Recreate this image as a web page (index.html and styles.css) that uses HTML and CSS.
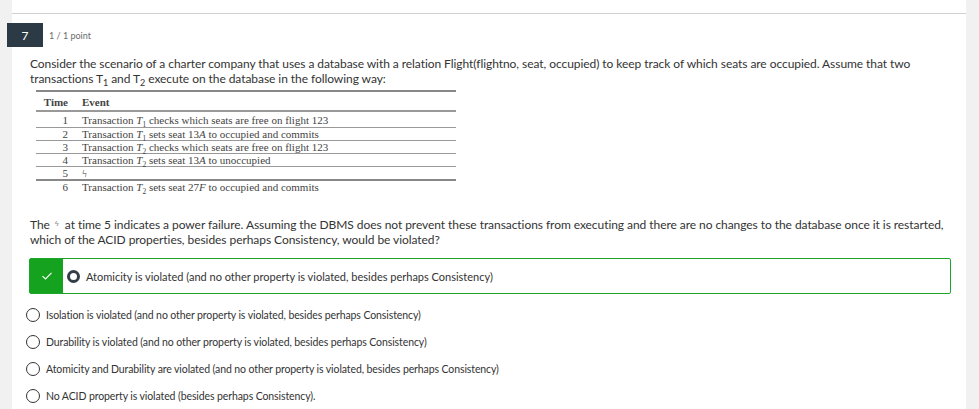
FILE: index.html
```html
<!DOCTYPE html>
<html>
<head>
<meta charset="utf-8">
<link rel="stylesheet" href="styles.css">
</head>
<body>
<div class="page">
  <div class="card">
    <div class="prev"></div>
    <div class="qhead">
      <div class="badge">7</div>
      <div class="points">1 / 1 point</div>
    </div>
    <div class="qbody">
      <p class="para">Consider the scenario of a charter company that uses a database with a relation Flight(flightno, seat, occupied) to keep track of which seats are occupied. Assume that two transactions T<sub>1</sub> and T<sub>2</sub> execute on the database in the following way:</p>
      <table class="events">
        <tr class="hdr"><th class="t">Time</th><th class="e">Event</th></tr>
        <tr class="r1"><td class="t">1</td><td class="e">Transaction <i>T</i><sub>1</sub> checks which seats are free on flight 123</td></tr>
        <tr><td class="t">2</td><td class="e">Transaction <i>T</i><sub>1</sub> sets seat 13<i>A</i> to occupied and commits</td></tr>
        <tr><td class="t">3</td><td class="e">Transaction <i>T</i><sub>2</sub> checks which seats are free on flight 123</td></tr>
        <tr><td class="t">4</td><td class="e">Transaction <i>T</i><sub>2</sub> sets seat 13<i>A</i> to unoccupied</td></tr>
        <tr class="r5"><td class="t">5</td><td class="e">ϟ</td></tr>
        <tr class="r6"><td class="t">6</td><td class="e">Transaction <i>T</i><sub>2</sub> sets seat 27<i>F</i> to occupied and commits</td></tr>
      </table>
      <p class="para para2">The <span class="bolt">ϟ</span> at time 5 indicates a power failure. Assuming the DBMS does not prevent these transactions from executing and there are no changes to the database once it is restarted, which of the ACID properties, besides perhaps Consistency, would be violated?</p>

      <div class="correct">
        <div class="mark">
          <svg width="12" height="10" viewBox="0 0 12 10"><path d="M1.5 5.2 L4.5 8 L10.5 1.8" fill="none" stroke="#fff" stroke-width="1.1"/></svg>
        </div>
        <span class="radio filled"></span>
        <span class="opt">Atomicity is violated (and no other property is violated, besides perhaps Consistency)</span>
      </div>
      <div class="option"><span class="radio"></span><span class="opt">Isolation is violated (and no other property is violated, besides perhaps Consistency)</span></div>
      <div class="option"><span class="radio"></span><span class="opt">Durability is violated (and no other property is violated, besides perhaps Consistency)</span></div>
      <div class="option"><span class="radio"></span><span class="opt">Atomicity and Durability are violated (and no other property is violated, besides perhaps Consistency)</span></div>
      <div class="option"><span class="radio"></span><span class="opt">No ACID property is violated (besides perhaps Consistency).</span></div>
    </div>
  </div>
</div>
</body>
</html>
```

FILE: styles.css
```css
html, body {
  margin: 0;
  padding: 0;
}
body {
  font-family: Lato, "Noto Sans", sans-serif;
  color: #333;
  background: #fff;
}
.page {
  display: flex;
  padding: 0 13px 0 12px;
  background: #f1f1f1;
  min-height: 409px;
  box-sizing: border-box;
}
.card {
  flex: 1;
  background: #fff;
}
.prev {
  height: 13px;
  border-bottom: 1px solid #d0d0d0;
}
.qhead {
  display: flex;
  align-items: center;
  margin-top: 9px;
  margin-left: -5px;
}
.badge {
  width: 36px;
  height: 24px;
  background: #2c3a45;
  color: #fff;
  font-size: 12px;
  display: flex;
  align-items: center;
  justify-content: center;
}
.points {
  margin-left: 6px;
  font-size: 9px;
  color: #6b6b6b;
}
.qbody {
  padding-left: 18px;
}
.para {
  margin: 9px 0 0;
  font-size: 12px;
  line-height: 15px;
  color: #333;
  letter-spacing: -0.06px;
  padding-right: 40px;
}
.para sub {
  font-size: 9px;
  line-height: 0;
}
.events {
  margin: 4px 0 0 6px;
  width: 420px;
  border-collapse: collapse;
  font-family: "Liberation Serif", serif;
  font-size: 11px;
  color: #444;
  border-top: 2px solid #888;
}
.events th, .events td {
  padding: 0;
  height: 12px;
  line-height: 12px;
  border-bottom: 1px solid #999;
  white-space: nowrap;
}
.events th {
  font-weight: bold;
  height: 17px;
  border-bottom: 2px solid #999;
  padding-top: 1px;
}
.events .t {
  width: 32px;
  text-align: right;
  padding-right: 14px;
}
.events .e {
  text-align: left;
}
.events .r1 td { height: 15px; }
.events .r5 td { border-bottom: 2px solid #888; }
.events .r6 td { border-bottom: none; height: 12px; }
.events sub {
  font-size: 7.5px;
  line-height: 0;
}
.para2 {
  margin-top: 22px;
  padding-right: 15px;
}
.bolt {
  font-size: 8px;
  vertical-align: 4px;
  color: #888;
  margin: 0 3px 0 2px;
}
.correct {
  margin-top: 11px;
  margin-right: 15px;
  height: 36px;
  box-sizing: border-box;
  border: 1px solid #1ea52a;
  border-radius: 2px;
  display: flex;
  align-items: center;
  margin-left: -1px;
}
.mark {
  width: 33px;
  align-self: stretch;
  background: #15a21f;
  display: flex;
  align-items: center;
  justify-content: center;
}
.radio {
  width: 14px;
  height: 14px;
  box-sizing: border-box;
  border: 1.3px solid #333;
  border-radius: 50%;
  flex: none;
}
.radio.filled {
  width: 13px;
  height: 13px;
  border: 3.5px solid #333d47;
  margin-left: 4px;
}
.opt {
  font-size: 11px;
  color: #333;
  margin-left: 6px;
}
.option {
  display: flex;
  align-items: center;
  height: 27px;
  margin-left: -4px;
}
.option .opt {
  font-size: 10.5px;
  letter-spacing: -0.1px;
}
.correct + .option {
  margin-top: 7px;
}
```
